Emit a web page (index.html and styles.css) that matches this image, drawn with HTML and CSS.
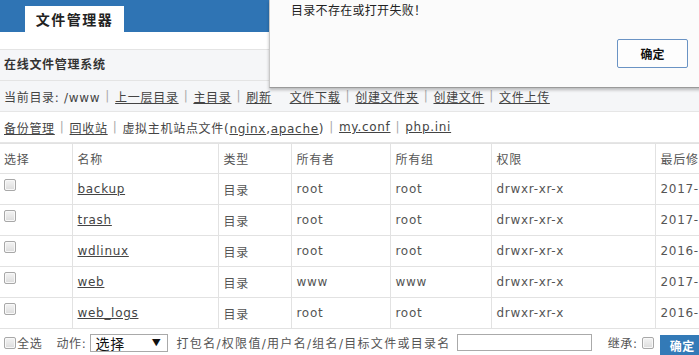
FILE: index.html
```html
<!DOCTYPE html>
<html>
<head>
<meta charset="utf-8">
<link rel="stylesheet" href="styles.css">
</head>
<body>
<div class="header">
  <div class="tab">文件管理器</div>
</div>
<div class="gap"></div>
<div class="title-bar">在线文件管理系统</div>
<div class="toolbar gray">
  <span>当前目录: /www</span><span class="sep">|</span><a>上一层目录</a><span class="sep">|</span><a>主目录</a><span class="sep">|</span><a>刷新</a><span class="wide"></span><a>文件下载</a><span class="sep">|</span><a>创建文件夹</a><span class="sep">|</span><a>创建文件</a><span class="sep">|</span><a>文件上传</a>
</div>
<div class="toolbar">
  <a>备份管理</a><span class="sep">|</span><a>回收站</a><span class="sep">|</span><span>虚拟主机站点文件(<a>nginx</a>,<a>apache</a>)</span><span class="sep">|</span><a>my.conf</a><span class="sep">|</span><a>php.ini</a>
</div>
<table class="files">
  <colgroup>
    <col class="c1"><col class="c2"><col class="c3"><col class="c4"><col class="c5"><col class="c6"><col class="c7">
  </colgroup>
  <thead>
    <tr><th>选择</th><th>名称</th><th>类型</th><th>所有者</th><th>所有组</th><th>权限</th><th>最后修改时间</th></tr>
  </thead>
  <tbody>
    <tr><td><input type="checkbox" class="cb"></td><td><a>backup</a></td><td>目录</td><td>root</td><td>root</td><td>drwxr-xr-x</td><td>2017-05-12 10:20:11</td></tr>
    <tr><td><input type="checkbox" class="cb"></td><td><a>trash</a></td><td>目录</td><td>root</td><td>root</td><td>drwxr-xr-x</td><td>2017-05-12 10:20:11</td></tr>
    <tr><td><input type="checkbox" class="cb"></td><td><a>wdlinux</a></td><td>目录</td><td>root</td><td>root</td><td>drwxr-xr-x</td><td>2016-11-03 09:12:40</td></tr>
    <tr><td><input type="checkbox" class="cb"></td><td><a>web</a></td><td>目录</td><td>www</td><td>www</td><td>drwxr-xr-x</td><td>2017-05-12 10:20:11</td></tr>
    <tr><td><input type="checkbox" class="cb"></td><td><a>web_logs</a></td><td>目录</td><td>root</td><td>root</td><td>drwxr-xr-x</td><td>2016-11-03 09:12:40</td></tr>
  </tbody>
</table>
<div class="actions">
  <label class="all"><input type="checkbox" class="cb">全选</label>
  <span class="act">动作:</span>
  <div class="select"><span>选择</span><span class="arrow">▼</span></div>
  <span class="hint">打包名/权限值/用户名/组名/目标文件或目录名</span>
  <input type="text" class="target">
  <span class="inherit">继承:</span>
  <input type="checkbox" class="cb">
  <button class="ok">确定</button>
</div>

<div class="dialog">
  <div class="msg">目录不存在或打开失败！</div>
  <div class="dlg-foot"><button class="dlg-btn">确定</button></div>
</div>
</body>
</html>
```
FILE: styles.css
```css
html, body {
  margin: 0;
  padding: 0;
}
body {
  width: 699px;
  height: 355px;
  overflow: hidden;
  position: relative;
  font-family: "DejaVu Sans", "Noto Sans CJK SC", sans-serif;
  font-size: 12px;
  letter-spacing: 0.7px;
  color: #555;
  background: #fff;
}
a {
  color: #444;
  text-decoration: underline;
}
.header {
  height: 32px;
  background: #2f74b4;
  display: flex;
  align-items: flex-end;
  padding-left: 25px;
}
.tab {
  width: 99px;
  height: 26px;
  background: #fff;
  display: flex;
  align-items: center;
  justify-content: center;
  font-family: "Noto Sans CJK SC", sans-serif;
  font-weight: bold;
  font-size: 14px;
  letter-spacing: 1.5px;
  color: #222;
}
.gap {
  height: 17px;
}
.title-bar {
  height: 30px;
  line-height: 30px;
  border-top: 1px solid #e4e4e4;
  border-bottom: 1px solid #e4e4e4;
  background: #f5f6f8;
  padding-left: 4px;
  font-weight: bold;
  color: #333;
}
.toolbar {
  height: 30px;
  display: flex;
  align-items: center;
  padding-left: 4px;
  border-bottom: 1px solid #e6e6e6;
  color: #444;
  white-space: nowrap;
}
.toolbar.gray {
  background: #f5f6f8;
}
.sep {
  color: #aaa;
  margin: 0 5px;
}
.wide {
  width: 18px;
}
.files {
  border-collapse: collapse;
  width: 800px;
  table-layout: fixed;
  white-space: nowrap;
}
.c1 { width: 72px; }
.c2 { width: 146px; }
.c3 { width: 73px; }
.c4 { width: 99px; }
.c5 { width: 101px; }
.c6 { width: 164px; }
.c7 { width: 145px; }
.files th, .files td {
  border: 1px solid #e2e2e2;
  text-align: left;
  font-weight: normal;
  padding: 0 0 0 5px;
  height: 30px;
  color: #555;
  overflow: hidden;
}
.files tr > :first-child {
  border-left: none;
  padding-left: 4px;
}
.files thead th {
  height: 29px;
}
.cb {
  -webkit-appearance: none;
  appearance: none;
  width: 12px;
  height: 12px;
  margin: 0;
  border: 1px solid #a8a8a8;
  border-radius: 2px;
  background: linear-gradient(#f4f4f4, #dcdcdc);
  box-shadow: inset 0 0 0 1px #f8f8f8;
  vertical-align: -1px;
  position: relative;
  top: -3px;
}
.actions {
  height: 27px;
  display: flex;
  align-items: center;
  padding-left: 4px;
  color: #555;
  white-space: nowrap;
}
.actions > * {
  flex-shrink: 0;
}
.actions .cb {
  top: 0;
}
.all {
  display: flex;
  align-items: center;
}
.all .cb {
  margin-right: 1px;
}
.act {
  margin-left: 14px;
}
.select {
  height: 18px;
  border: 1px solid #a9a9a9;
  margin-left: 3px;
  display: flex;
  align-items: center;
  justify-content: space-between;
  padding: 0 5px 0 5px;
  box-sizing: border-box;
  width: 78px;
  color: #111;
  font-family: "Noto Sans CJK SC", sans-serif;
  font-size: 14px;
}
.arrow {
  font-size: 9px;
  color: #111;
}
.hint {
  margin-left: 9px;
  letter-spacing: 1.3px;
}
.target {
  margin: 0 0 0 6px;
  width: 135px;
  height: 17px;
  border: 1px solid #aaa;
  padding: 0;
  box-sizing: border-box;
}
.inherit {
  margin-left: 16px;
  margin-right: 4px;
}
.ok {
  margin-left: 6px;
  height: 21px;
  width: 45px;
  border: none;
  background: #337ab7;
  color: #fff;
  font-family: "Noto Sans CJK SC", sans-serif;
  font-weight: bold;
  font-size: 12px;
  letter-spacing: 0.5px;
  padding: 0;
  text-align: center;
  align-self: flex-end;
}
.dialog {
  position: absolute;
  left: 269px;
  top: 0;
  width: 440px;
  height: 88px;
  background: #fbfbfb;
  border-left: 1px solid #c8c8c8;
  border-bottom: 1px solid #9a9a9a;
  box-shadow: 0 2px 3px rgba(0,0,0,0.25);
  box-sizing: border-box;
}
.msg {
  padding-left: 21px;
  padding-top: 1px;
  font-family: "Noto Sans CJK SC", sans-serif;
  font-size: 12px;
  letter-spacing: 0.3px;
  color: #222;
  line-height: 17px;
}
.dlg-foot {
  padding-top: 21px;
  padding-left: 347px;
}
.dlg-btn {
  width: 71px;
  height: 29px;
  border: 1px solid #6a93c4;
  border-radius: 2px;
  background: #fdfdfd;
  font-family: "Noto Sans CJK SC", sans-serif;
  font-weight: bold;
  font-size: 12px;
  color: #111;
  padding: 0;
}
```
